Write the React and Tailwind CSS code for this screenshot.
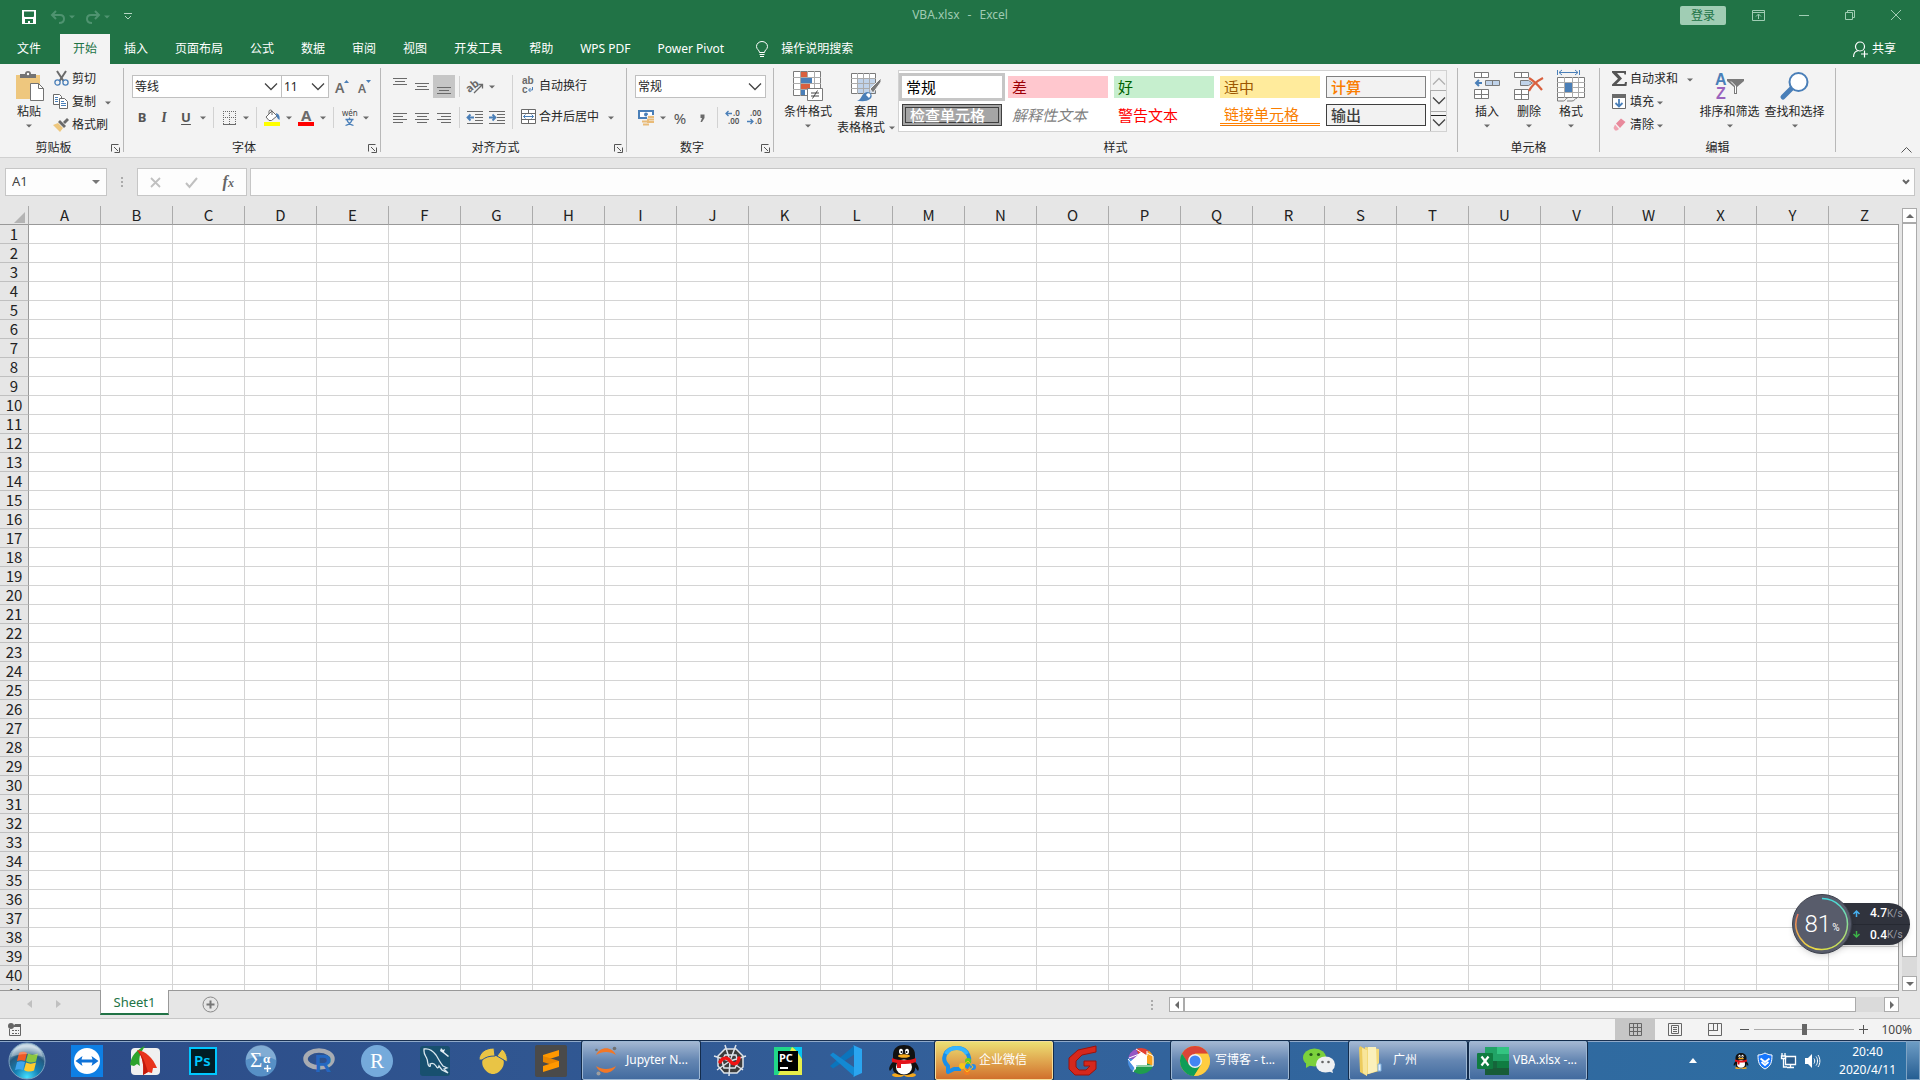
import React, { useState } from 'react';

const columns = 'ABCDEFGHIJKLMNOPQRSTUVWXYZ'.split('');
const rows = Array.from({ length: 42 }, (_, i) => i + 1);

const tabs = ['插入', '页面布局', '公式', '数据', '审阅', '视图', '开发工具', '帮助', 'WPS PDF', 'Power Pivot'];

const cellStyles = [
  { name: '常规', className: 'bg-white text-black ring-[3px] ring-[#c6c6c6]' },
  { name: '差', className: 'bg-[#ffc7ce] text-[#9c0006]' },
  { name: '好', className: 'bg-[#c6efce] text-[#006100]' },
  { name: '适中', className: 'bg-[#ffeb9c] text-[#9c5700]' },
  { name: '计算', className: 'bg-[#f2f2f2] text-[#fa7d00] font-medium border border-[#7f7f7f]' },
  { name: '检查单元格', className: 'bg-[#a5a5a5] text-white font-medium border-4 border-double border-[#3f3f3f]' },
  { name: '解释性文本', className: 'bg-white text-[#7f7f7f] italic' },
  { name: '警告文本', className: 'bg-white text-[#ff0000]' },
  { name: '链接单元格', className: 'bg-white text-[#fa7d00] border-b-3 border-double border-[#ff8001]' },
  { name: '输出', className: 'bg-[#f2f2f2] text-[#3f3f3f] font-medium border border-[#3f3f3f]' },
];

/* ---------- small shared pieces ---------- */

function Svg({ w, h, children, className = '', ...rest }) {
  return (
    <svg width={w} height={h} viewBox={`0 0 ${w} ${h}`} fill="none" className={`shrink-0 overflow-visible ${className}`} aria-hidden="true" {...rest}>
      {children}
    </svg>
  );
}

function Caret({ color = '#6a6a6a' }) {
  return (
    <Svg w={6} h={4}>
      <path d="M0 0.500h6L3 3.500z" fill={color} />
    </Svg>
  );
}

function Chevron({ color = '#444', up = false }) {
  return (
    <Svg w={14} h={8}>
      <path d={up ? 'M1 7.500L7 1.500L13 7.500' : 'M1 0.500L7 6.500L13 0.500'} stroke={color} strokeWidth="1.300" />
    </Svg>
  );
}

function CaretButton({ label }) {
  return (
    <button aria-label={label} className="flex h-[23px] w-3 items-center justify-center">
      <Caret />
    </button>
  );
}

function IconButton({ label, children }) {
  return (
    <button aria-label={label} className="flex h-[23px] w-[22px] items-center justify-center">
      {children}
    </button>
  );
}

function Divider() {
  return <span className="mx-1 h-[21px] w-px bg-[#d2d2d2]" />;
}

function Combo({ label, value, className }) {
  return (
    <label className={`flex h-[23px] items-center border border-[#c0c0c0] bg-white pr-[3px] pl-[2px] ${className}`}>
      <select aria-label={label} className="min-w-0 flex-1 appearance-none bg-transparent text-xs text-[#262626] outline-none">
        <option>{value}</option>
      </select>
      <Chevron />
    </label>
  );
}

function Group({ label, launcher = false, className, children }) {
  return (
    <section className={`flex shrink-0 flex-col ${className}`}>
      <div className="mt-1 mb-[5px] flex flex-1 flex-col border-r border-[#b8b8b8]">
        <div className="flex flex-1">{children}</div>
        <div className="-mb-1 flex h-4 items-center">
          <span className="flex-1 text-center leading-4">{label}</span>
          {launcher && (
            <button aria-label={`${label}设置`} className="flex w-4 justify-center">
              <Svg w={9} h={9}>
                <path d="M0.500 7.500V0.500H7.500M3 3l4 4M8.500 3.500v5h-5" stroke="#555" />
              </Svg>
            </button>
          )}
        </div>
      </div>
    </section>
  );
}

function BigButton({ icon, label, label2, className }) {
  return (
    <button className={`flex flex-col items-center self-start ${className}`}>
      <span className="flex h-9 items-center justify-center">{icon}</span>
      <span className="leading-4 whitespace-nowrap">{label}</span>
      {label2 ? (
        <span className="flex items-center gap-1 leading-4 whitespace-nowrap">
          {label2}
          <Caret />
        </span>
      ) : (
        <span className="flex h-3 items-center">
          <Caret />
        </span>
      )}
    </button>
  );
}

function SmallButton({ icon, label, children }) {
  return (
    <div className="flex h-[23px] items-center">
      <button className="flex h-[23px] items-center pb-[2px]">
        <span className="flex w-[22px] justify-center">{icon}</span>
        <span className="whitespace-nowrap">{label}</span>
      </button>
      {children}
    </div>
  );
}

function Lines({ widths, align = 'center' }) {
  const x = (w) => (align === 'left' ? 0 : align === 'right' ? 14 - w : (14 - w) / 2);
  return (
    <Svg w={14} h={3 * (widths.length - 1) + 1} shapeRendering="crispEdges">
      {widths.map((w, i) => (
        <rect key={i} x={x(w)} y={i * 3} width={w} height="1" fill="#6a6a6a" />
      ))}
    </Svg>
  );
}

/* ---------- ribbon icons ---------- */

const PasteIcon = () => (
  <Svg w={30} h={32}>
    <path d="M2 5h24v24H2z" fill="#eec77e" />
    <path d="M6 8V4h5a3 3 0 016 0h5v4z" fill="#737373" />
    <circle cx="14" cy="4" r="1.200" fill="#fff" />
    <path d="M16.500 13.500h8l5 5v12h-13z" fill="#fff" stroke="#737373" />
    <path d="M24.500 13.500v5h5" stroke="#737373" />
  </Svg>
);

const CutIcon = () => (
  <Svg w={15} h={15}>
    <path d="M3 0l6.500 10M12 0L5.500 10" stroke="#6a6a6a" strokeWidth="2" />
    <circle cx="3.500" cy="11.500" r="2.600" stroke="#4a7fb8" strokeWidth="1.300" />
    <circle cx="11.500" cy="11.500" r="2.600" stroke="#4a7fb8" strokeWidth="1.300" />
  </Svg>
);

const CopyIcon = () => (
  <Svg w={16} h={15}>
    <path d="M0.500 0.500h6l2 2v8h-8z" fill="#fff" stroke="#6a6a6a" />
    <path d="M6.500 4.500h5l3 3v7h-8z" fill="#fff" stroke="#6a6a6a" />
    <path d="M2 3.500h3M2 5.500h3M2 7.500h3M8 7.500h3M8 9.500h5M8 11.500h5" stroke="#4a7fb8" />
  </Svg>
);

const BrushIcon = () => (
  <Svg w={16} h={14}>
    <path d="M14 0l2 2-4 4-2-2z" fill="#6a6a6a" />
    <path d="M7 2l6 6-2 2-6-6z" fill="#6a6a6a" />
    <path d="M0 7l5-2 5 5-3 4z" fill="#eec77e" />
  </Svg>
);

const BucketIcon = () => (
  <Svg w={16} h={17}>
    <path d="M2 8l6-6 5 5-5.500 4.500H5z" fill="#fff" stroke="#6a6a6a" />
    <path d="M5 5V2.500a1.500 1.500 0 013 0V6" stroke="#6a6a6a" />
    <path d="M12 4c3 1 4 3 3.500 7-2-1-3-3-3.500-7z" fill="#4a7fb8" />
    <path d="M0 13h16v4H0z" fill="#ffff00" />
  </Svg>
);

const BorderIcon = () => (
  <Svg w={13} h={14} shapeRendering="crispEdges">
    <path d="M0 0.500h13M0 6.500h13M0.500 0v13M6.500 0v13M12.500 0v13" stroke="#6a6a6a" strokeDasharray="1 1" />
    <path d="M0 13h13" stroke="#6a6a6a" strokeWidth="1" />
  </Svg>
);

const IndentIcon = ({ increase = false }) => (
  <Svg w={16} h={13}>
    <path d="M0 0.500h16M8 3.500h8M8 6.500h8M8 9.500h8M0 12.500h16" stroke="#6a6a6a" />
    <path d={increase ? 'M0 6.500h6M3.500 3.500l3 3-3 3' : 'M7 6.500H1M3.500 3.500l-3 3 3 3'} stroke="#4a7fb8" strokeWidth="1.800" />
  </Svg>
);

const OrientIcon = () => (
  <Svg w={17} h={15}>
    <text x="-1" y="11" fontSize="11" fontWeight="bold" fill="#6a6a6a" fontFamily="Noto Sans" transform="rotate(-40 5 8)">ab</text>
    <path d="M7 14l8-8M11.500 5.500h4v4" stroke="#6a6a6a" strokeWidth="1.300" />
  </Svg>
);

const WrapIcon = () => (
  <Svg w={14} h={17}>
    <text x="1" y="7" fontSize="10" fontWeight="600" fill="#6a6a6a" fontFamily="Liberation Sans">ab</text>
    <text x="1" y="16" fontSize="10" fontWeight="600" fill="#6a6a6a" fontFamily="Liberation Sans">c</text>
    <path d="M11.500 10v3H8M9.500 11l-2 2 2 2" stroke="#4a7fb8" />
  </Svg>
);

const MergeIcon = () => (
  <Svg w={15} h={15}>
    <path d="M0.500 0.500h14v14H0.500zM0.500 4.500h14M0.500 10.500h14M7.500 0.500v4M7.500 10.500v4" fill="#fff" stroke="#6a6a6a" />
    <path d="M2.500 7.500h10M4.500 5.500l-2 2 2 2M10.500 5.500l2 2-2 2" stroke="#4a7fb8" />
  </Svg>
);

const MoneyIcon = () => (
  <Svg w={17} h={17}>
    <path d="M1 2h14v7H1z" fill="#fff" stroke="#4a7fb8" strokeWidth="2" />
    <circle cx="8" cy="5.500" r="2" fill="#4a7fb8" />
    <path d="M9 7.500h7M9 10h7M4 12.500h7M11.500 12.500h5M4 15.500h7" stroke="#f3f3f3" strokeWidth="3" />
    <path d="M10 8h6M9 10.500h7M4 12.500h7M9 13h7M5 15.500h6" stroke="#e9bb78" strokeWidth="1.800" />
  </Svg>
);

const DecimalIcon = ({ increase = false }) => (
  <Svg w={16} h={15}>
    <text x={increase ? 8 : 3} y="6" fontSize="8" fontWeight="600" fill="#555" fontFamily="Noto Sans">{increase ? '.0' : '.00'}</text>
    <text x={increase ? 3 : 8} y="14" fontSize="8" fontWeight="600" fill="#555" fontFamily="Noto Sans">{increase ? '.00' : '.0'}</text>
    <path d={increase ? 'M7 3.500H1M3.500 1l-2.500 2.500 2.500 2.500' : 'M0 11.500h6M3.500 9l2.500 2.500-2.500 2.500'} stroke="#4a7fb8" strokeWidth="1.300" />
  </Svg>
);

const ConditionalIcon = () => (
  <Svg w={30} h={32}>
    <path d="M0.500 1.500h27v24h-27z" fill="#fff" stroke="#7a7a7a" />
    <path d="M0 7.500h28M0 13.500h28M0 19.500h28M7.500 1v25M14.500 1v25M21.500 1v25" stroke="#ababab" />
    <path d="M8 2h6v5H8zM8 14h9v5H8z" fill="#d9603e" />
    <path d="M8 8h11v5H8zM8 20h4v5H8z" fill="#4a7fb8" />
    <path d="M14.500 18.500h15v12h-15z" fill="#fff" stroke="#7a7a7a" />
    <path d="M18 23h8M18 26h8M24.500 20.500l-5 8" stroke="#444" />
  </Svg>
);

const TableFormatIcon = () => (
  <Svg w={30} h={32}>
    <path d="M0.500 3.500h24v20h-24z" fill="#fff" />
    <path d="M7 9h18v15H7z" fill="#c0d3ea" />
    <path d="M0.500 3.500h24v20h-24z" stroke="#7a7a7a" />
    <path d="M0 8.500h25M0 13.500h25M0 18.500h25M6.500 3v21M12.500 3v21M18.500 3v21" stroke="#ababab" />
    <path d="M30 8L19 19l3 4 8-11z" fill="#7a7a7a" stroke="#f3f3f3" />
    <path d="M6 31c5-1 4-8 10-9 5 0 6 5 3 7-3 3-9 2-13 2z" fill="#4a7fb8" />
    <path d="M15 25c1-2 3-2 4-1s0 3-1 4z" fill="#fff" />
  </Svg>
);

const InsertIcon = () => (
  <Svg w={27} h={28}>
    <path d="M0.500 0.500h14v5h-14zM7.500 0v6M0.500 17.500h14v9h-14zM0 22.500h15M7.500 17v10" fill="#fff" stroke="#7a7a7a" />
    <path d="M11.500 8.500h14v5h-14zM18.500 8v6" fill="#c0d3ea" stroke="#7a7a7a" />
    <path d="M8 11H2M5 8l-3 3 3 3" stroke="#4a7fb8" strokeWidth="2" />
  </Svg>
);

const DeleteIcon = () => (
  <Svg w={30} h={28}>
    <path d="M0.500 0.500h14v5h-14zM7.500 0v6M0.500 17.500h14v10h-14zM0 22.500h15M7.500 17v10" fill="#fff" stroke="#7a7a7a" />
    <path d="M6.500 8.500h8l4 2.500-4 2.500h-8z" fill="#c0d3ea" stroke="#7a7a7a" />
    <path d="M15 6c5 3 9 7 13 12M29 6c-6 3-11 7-14 13" stroke="#d9603e" strokeWidth="2.200" />
  </Svg>
);

const FormatIcon = () => (
  <Svg w={28} h={32}>
    <path d="M0.500 0v5M22.500 0v5M2 2.500h19M5 0L2 2.500 5 5M18 0l3 2.500L18 5" stroke="#4a7fb8" />
    <path d="M0.500 7.500h27v20h-27z" fill="#fff" stroke="#7a7a7a" />
    <path d="M0 12.500h28M0 22.500h28M7.500 7v21M15.500 7v21M21.500 7v21M0 17.500h28" stroke="#ababab" />
    <path d="M8 13h7v9H8z" fill="#4a7fb8" />
    <path d="M0.500 28v3h6c2 0 2-3 4-3M10 31h5c3 0 3-3 5-3" stroke="#7a7a7a" />
  </Svg>
);

const SortIcon = () => (
  <Svg w={29} h={30}>
    <text x="0" y="14" fontSize="16" fontWeight="bold" fill="#4a7fb8" fontFamily="Liberation Sans">A</text>
    <text x="1" y="28" fontSize="16" fontWeight="bold" fill="#9a63bd" fontFamily="Liberation Sans">Z</text>
    <path d="M12 8h17v2l-7 6v7h-3v-7l-7-6z" fill="#7a7a7a" />
    <path d="M16 10.500l4.500 4.500v7" stroke="#fff" />
  </Svg>
);

const FindIcon = () => (
  <Svg w={28} h={30}>
    <path d="M11 17L2 26" stroke="#4a7fb8" strokeWidth="5" strokeLinecap="round" />
    <circle cx="17.500" cy="11" r="9" fill="#fff" stroke="#4a7fb8" strokeWidth="2" />
  </Svg>
);

const SumIcon = () => (
  <Svg w={15} h={15}>
    <path d="M0 0h14v3.500h-1.500L12 2H5l5 5.500L4.500 13H12.500l0.500-2H15l-0.500 4H0v-1.500L6 7.800 0 1.500z" fill="#555" />
  </Svg>
);

const FillIcon = () => (
  <Svg w={14} h={15}>
    <path d="M0.500 0.500h13v14h-13z" fill="#fff" stroke="#6a6a6a" />
    <path d="M0 0h14v4H0z" fill="#6a6a6a" />
    <path d="M7 5v7M3.500 9L7 12.500 10.500 9" stroke="#4a7fb8" strokeWidth="1.800" />
  </Svg>
);

const EraserIcon = () => (
  <Svg w={13} h={13}>
    <path d="M8 0.500l4.500 3.500L7 10 3 5.500z" fill="#e8899b" />
    <path d="M2 6.500L6 11l-2 1.500H2L0.500 10z" fill="#f0a3b1" />
  </Svg>
);

/* ---------- title bar and ribbon ---------- */

function TitleBar() {
  return (
    <header className="grid h-[34px] grid-cols-[1fr_auto_1fr] text-[#9fcbb2]">
      <div className="flex items-center pb-px pl-[22px]">
        <button aria-label="保存">
          <Svg w={14} h={14}>
            <path d="M0 0h14v14H0z" fill="#fff" />
            <path d="M2 1.500h10v5L11 7H3L2 6.500zM3 9h8v4H8v-2H6v2H3z" fill="#217346" />
          </Svg>
        </button>
        <button aria-label="撤消" className="ml-[15px]">
          <Svg w={14} h={14}>
            <path d="M5 1L1 5l4 4M1.500 5H9c3 0 4 2 4 4s-1.500 4-5 4" stroke="#4f9370" strokeWidth="2" />
          </Svg>
        </button>
        <span className="ml-1"><Caret color="#4f9370" /></span>
        <button aria-label="恢复" className="ml-[11px]">
          <Svg w={14} h={14}>
            <path d="M9 1l4 4-4 4M12.500 5H5C2 5 1 7 1 9s1.500 4 5 4" stroke="#4f9370" strokeWidth="2" />
          </Svg>
        </button>
        <span className="ml-1"><Caret color="#4f9370" /></span>
        <button aria-label="自定义快速访问工具栏" className="ml-[14px]">
          <Svg w={8} h={7}>
            <path d="M0 0.500h8M1 3l3 3 3-3" stroke="#b5d5c3" />
          </Svg>
        </button>
      </div>
      <h1 className="flex items-center gap-2 pb-1">
        <span>VBA.xlsx</span>
        <span>-</span>
        <span>Excel</span>
      </h1>
      <div className="flex items-center justify-end pr-px pb-1">
        <button className="mr-[9px] h-[19px] w-[46px] rounded-xs bg-[#a0cdb4] leading-[19px] text-[#217346]">登录</button>
        <button aria-label="功能区显示选项" className="flex w-[46px] justify-center">
          <Svg w={13} h={11}>
            <path d="M0.500 0.500h12v10H0.500zM0.500 2.500h12M6.500 9V4.500M4 6.500L6.500 4 9 6.500" stroke="#a0cdb4" />
          </Svg>
        </button>
        <button aria-label="最小化" className="flex w-[46px] justify-center">
          <Svg w={10} h={1}><path d="M0 0.500h10" stroke="#a0cdb4" /></Svg>
        </button>
        <button aria-label="还原" className="flex w-[46px] justify-center">
          <Svg w={10} h={10}>
            <path d="M0.500 2.500h7v7h-7zM2.500 2.500v-2h7v7h-2" stroke="#a0cdb4" />
          </Svg>
        </button>
        <button aria-label="关闭" className="flex w-[46px] justify-center">
          <Svg w={10} h={10}><path d="M0 0l10 10M10 0L0 10" stroke="#a0cdb4" /></Svg>
        </button>
      </div>
    </header>
  );
}

function TabBar() {
  return (
    <nav className="flex h-[30px] items-stretch gap-px pr-6 text-white">
      <button className="mr-px px-[17px] pb-px">文件</button>
      <button className="bg-[#f3f3f3] px-[13px] pb-px text-[#217346]">开始</button>
      {tabs.map((tab) => (
        <button key={tab} className="px-[13px] pb-px whitespace-nowrap">{tab}</button>
      ))}
      <button className="ml-[18px] flex items-center gap-[13px]">
        <Svg w={12} h={17}>
          <path d="M3.500 11.500C3.500 9 0.500 8.500 0.500 5.500a5.500 5 0 0111 0c0 3-3 3.500-3 6zM3.500 13.500h5M4 15.500h4" stroke="#fff" />
        </Svg>
        操作说明搜索
      </button>
      <button className="ml-auto flex items-center gap-1">
        <Svg w={15} h={17}>
          <circle cx="7" cy="5.500" r="4.500" stroke="#fff" strokeWidth="1.200" />
          <path d="M0.500 16c0-4 2-6 5-6.500M11.500 9.500v7M8 13h7" stroke="#fff" strokeWidth="1.200" />
        </Svg>
        共享
      </button>
    </nav>
  );
}

function Ribbon() {
  return (
    <div className="flex h-[94px] border-b border-[#d0d0d0] bg-[#f3f3f3] text-[#262626]">
      <Group label="剪贴板" launcher className="w-[124px]">
        <BigButton icon={<PasteIcon />} label="粘贴" className="ml-2 w-[42px]" />
        <div>
          <SmallButton icon={<CutIcon />} label="剪切" />
          <SmallButton icon={<CopyIcon />} label="复制">
            <span className="ml-[6px]"><CaretButton label="复制选项" /></span>
          </SmallButton>
          <SmallButton icon={<BrushIcon />} label="格式刷" />
        </div>
      </Group>

      <Group label="字体" launcher className="w-[257px]">
        <div className="flex flex-col gap-2 pt-[7px] pl-2">
          <div className="flex items-center">
            <Combo label="字体" value="等线" className="w-[150px]" />
            <Combo label="字号" value="11" className="-ml-px w-12" />
            <span className="w-[2px]" />
            <IconButton label="增大字号">
              <Svg w={14} h={16}>
                <text x="0" y="14" fontSize="14" fontWeight="600" fill="#6a6a6a" fontFamily="Noto Sans">A</text>
                <path d="M9 4l2.500-3L14 4z" fill="#4a7fb8" />
              </Svg>
            </IconButton>
            <IconButton label="减小字号">
              <Svg w={13} h={16}>
                <text x="0" y="14" fontSize="12" fontWeight="600" fill="#6a6a6a" fontFamily="Noto Sans">A</text>
                <path d="M8 1l2.500 3L13 1z" fill="#4a7fb8" />
              </Svg>
            </IconButton>
          </div>
          <div className="-ml-px flex items-center text-[13px] text-[#555]">
            <IconButton label="加粗"><b>B</b></IconButton>
            <IconButton label="倾斜"><i className="font-serif text-sm font-bold">I</i></IconButton>
            <IconButton label="下划线"><span className="font-bold underline underline-offset-2">U</span></IconButton>
            <CaretButton label="下划线选项" />
            <Divider />
            <IconButton label="边框"><BorderIcon /></IconButton>
            <CaretButton label="边框选项" />
            <Divider />
            <IconButton label="填充颜色"><BucketIcon /></IconButton>
            <CaretButton label="填充颜色选项" />
            <IconButton label="字体颜色">
              <Svg w={16} h={17}>
                <text x="3" y="12" fontSize="15" fontWeight="bold" fill="#6a6a6a" fontFamily="Noto Sans">A</text>
                <path d="M0 13h16v4H0z" fill="#ff0000" />
              </Svg>
            </IconButton>
            <CaretButton label="字体颜色选项" />
            <Divider />
            <IconButton label="拼音">
              <Svg w={17} h={18}>
                <text x="1" y="7" fontSize="8" fill="#444" fontFamily="Noto Sans">wén</text>
                <path d="M8.500 8.500v2M4.500 10.500h8M6 11c1 3 3 4.500 6.500 5.500M11 11c-1 3-3 4.500-6.500 5.500" stroke="#4a7fb8" strokeWidth="1.300" />
              </Svg>
            </IconButton>
            <CaretButton label="拼音选项" />
          </div>
        </div>
      </Group>

      <Group label="对齐方式" launcher className="w-[246px]">
        <div className="flex items-start pt-[7px] pl-2">
          <div className="flex w-[124px] flex-col gap-2 border-r border-[#d2d2d2]">
            <div className="flex items-center">
              <button aria-label="顶端对齐" className="flex h-[23px] w-[22px] items-start justify-center pt-[3px]"><Lines widths={[14, 10, 14]} /></button>
              <IconButton label="垂直居中"><Lines widths={[14, 10, 14]} /></IconButton>
              <button aria-label="底端对齐" className="flex h-[23px] w-[22px] items-end justify-center bg-[#c6c6c6] pb-1"><Lines widths={[14, 10, 14]} /></button>
              <Divider />
              <IconButton label="方向"><OrientIcon /></IconButton>
              <CaretButton label="方向选项" />
            </div>
            <div className="flex items-center">
              <IconButton label="左对齐"><Lines widths={[14, 10, 14, 10]} align="left" /></IconButton>
              <IconButton label="居中"><Lines widths={[14, 10, 14, 10]} /></IconButton>
              <IconButton label="右对齐"><Lines widths={[14, 10, 14, 10]} align="right" /></IconButton>
              <Divider />
              <IconButton label="减少缩进量"><IndentIcon /></IconButton>
              <IconButton label="增加缩进量"><IndentIcon increase /></IconButton>
            </div>
          </div>
          <div className="flex flex-col gap-2 pl-1">
            <SmallButton icon={<WrapIcon />} label="自动换行" />
            <SmallButton icon={<MergeIcon />} label="合并后居中">
              <span className="ml-[6px]"><CaretButton label="合并选项" /></span>
            </SmallButton>
          </div>
        </div>
      </Group>

      <Group label="数字" launcher className="w-[147px]">
        <div className="flex flex-col gap-2 pt-[7px] pl-2">
          <Combo label="数字格式" value="常规" className="w-[131px]" />
          <div className="flex items-center text-[15px] text-[#555]">
            <IconButton label="会计数字格式"><MoneyIcon /></IconButton>
            <CaretButton label="会计数字格式选项" />
            <IconButton label="百分比样式">%</IconButton>
            <IconButton label="千位分隔样式">
              <Svg w={5} h={8}><path d="M0.500 0.500h4V4L2 8H0.500L2 4H0.500z" fill="#6a6a6a" /></Svg>
            </IconButton>
            <Divider />
            <IconButton label="增加小数位数"><DecimalIcon increase /></IconButton>
            <IconButton label="减少小数位数"><DecimalIcon /></IconButton>
          </div>
        </div>
      </Group>

      <Group label="样式" className="w-[684px]">
        <BigButton icon={<ConditionalIcon />} label="条件格式" className="ml-[7px] w-[54px]" />
        <BigButton icon={<TableFormatIcon />} label="套用" label2="表格格式" className="w-[62px]" />
        <div className="mt-[2px] ml-px flex self-start border border-[#d2d2d2] bg-white">
          <div className="grid grid-cols-5 gap-[6px] py-[5px] pr-1 pl-[3px] font-['Noto_Sans_CJK_SC',sans-serif] text-[15px] leading-[18px]">
            {cellStyles.map((s) => (
              <button key={s.name} className={`flex h-[22px] w-[100px] items-center pl-1 text-left whitespace-nowrap ${s.className}`}>
                {s.name}
              </button>
            ))}
          </div>
          <div className="flex w-4 flex-col bg-[#f3f3f3]">
            <button aria-label="上一行" className="flex flex-1 items-center justify-center border-l border-[#d2d2d2]"><Chevron up color="#b0b0b0" /></button>
            <button aria-label="下一行" className="flex flex-1 items-center justify-center border border-r-0 border-[#ababab]"><Chevron /></button>
            <button aria-label="其他" className="flex flex-1 flex-col items-center justify-center gap-[3px] border-l border-[#ababab]">
              <span className="h-px w-full bg-[#222]" />
              <Chevron />
            </button>
          </div>
        </div>
      </Group>

      <Group label="单元格" className="w-[142px]">
        <BigButton icon={<InsertIcon />} label="插入" className="ml-2 w-[42px]" />
        <BigButton icon={<DeleteIcon />} label="删除" className="w-[42px]" />
        <BigButton icon={<FormatIcon />} label="格式" className="w-[42px]" />
      </Group>

      <Group label="编辑" className="w-[236px]">
        <div className="w-[97px] pl-2">
          <SmallButton icon={<SumIcon />} label="自动求和">
            <span className="ml-[6px]"><CaretButton label="自动求和选项" /></span>
          </SmallButton>
          <SmallButton icon={<FillIcon />} label="填充"><CaretButton label="填充选项" /></SmallButton>
          <SmallButton icon={<EraserIcon />} label="清除"><CaretButton label="清除选项" /></SmallButton>
        </div>
        <BigButton icon={<SortIcon />} label="排序和筛选" className="w-[65px]" />
        <BigButton icon={<FindIcon />} label="查找和选择" className="w-[65px]" />
      </Group>

      <button aria-label="折叠功能区" className="mr-2 mb-1 ml-auto self-end">
        <Svg w={11} h={6}><path d="M0.500 5.500l5-5 5 5" stroke="#555" /></Svg>
      </button>
    </div>
  );
}

function Dots() {
  return (
    <Svg w={2} h={10}>
      <path d="M0 0h2v2H0zM0 4h2v2H0zM0 8h2v2H0z" fill="#ababab" />
    </Svg>
  );
}

function FormulaBar() {
  const [formula, setFormula] = useState('');
  return (
    <div className="flex items-center px-[5px] py-[10px]">
      <div className="flex h-7 w-[102px] items-center border border-[#c6c6c6] bg-[#fdfdfd] pr-[6px]">
        <input aria-label="名称框" defaultValue="A1" className="min-w-0 flex-1 bg-transparent pl-[6px] text-[13px] text-[#444] outline-none" />
        <Svg w={8} h={4}><path d="M0 0h8L4 4z" fill="#777" /></Svg>
      </div>
      <span className="flex w-[30px] justify-center"><Dots /></span>
      <div className="flex h-7 w-[110px] items-center justify-around border border-[#c6c6c6] bg-[#fdfdfd]">
        <button aria-label="取消">
          <Svg w={11} h={11}><path d="M1 1l9 9M10 1l-9 9" stroke="#c0c0c0" strokeWidth="1.800" /></Svg>
        </button>
        <button aria-label="输入">
          <Svg w={13} h={11}><path d="M1 6l3.500 4L12 1" stroke="#c0c0c0" strokeWidth="2" /></Svg>
        </button>
        <button aria-label="插入函数" className="font-['Liberation_Serif',serif] text-base leading-5 font-bold text-[#666] italic">
          f<span className="text-xs">x</span>
        </button>
      </div>
      <div className="ml-[3px] flex h-7 flex-1 items-center border border-[#c6c6c6] bg-[#fdfdfd] pr-1">
        <input aria-label="编辑栏" value={formula} onChange={(e) => setFormula(e.target.value)} className="min-w-0 flex-1 bg-transparent px-2 text-[13px] outline-none" />
        <Svg w={8} h={6}><path d="M1 1l3 3 3-3" stroke="#666" strokeWidth="2" /></Svg>
      </div>
    </div>
  );
}

/* ---------- worksheet ---------- */

function ScrollButton({ label, d }) {
  return (
    <button aria-label={label} className="flex size-[15px] shrink-0 items-center justify-center border border-[#ababab] bg-white">
      <Svg w={8} h={8}><path d={d} fill="#6a6a6a" /></Svg>
    </button>
  );
}

function Worksheet() {
  return (
    <div className="flex min-h-0 flex-1">
      <div className="min-w-0 flex-1 overflow-hidden border-b border-[#999]">
        <table className="w-[1901px] table-fixed border-separate border-spacing-0 font-['Noto_Sans_CJK_SC',sans-serif] text-[15px] leading-[18px] text-[#222]">
          <thead>
            <tr>
              <th className="h-[19px] w-[29px] border-r border-b border-r-[#ababab] border-b-[#999] p-0">
                <Svg w={11} h={11} className="mt-1 mr-[3px] ml-auto"><path d="M11 0v11H0z" fill="#b4b4b4" /></Svg>
              </th>
              {columns.map((c) => (
                <th key={c} className="h-[19px] w-[72px] border-r border-b border-r-[#ababab] border-b-[#999] p-0 text-center font-normal">{c}</th>
              ))}
            </tr>
          </thead>
          <tbody>
            {rows.map((r) => (
              <tr key={r}>
                <th className="h-[19px] border-r border-b border-r-[#999] border-b-[#c0c0c0] p-0 text-center font-normal">{r}</th>
                {columns.map((c) => (
                  <td key={c} className="h-[19px] border-r border-b border-[#d4d4d4] bg-white p-0" />
                ))}
              </tr>
            ))}
          </tbody>
        </table>
      </div>
      <span className="mt-[18px] w-px bg-[#999]" />
      <div className="mx-[3px] mt-[2px] flex w-[15px] flex-col bg-[#dadada]">
        <ScrollButton label="向上滚动" d="M0 6l4-4 4 4z" />
        <div className="flex-1 border border-[#ababab] bg-white" />
        <div className="h-[19px]" />
        <ScrollButton label="向下滚动" d="M0 2h8L4 6z" />
      </div>
    </div>
  );
}

function SheetBar() {
  return (
    <div className="flex h-[27px] items-start">
      <div className="flex h-[26px] w-[100px] items-center gap-6 pl-[27px]">
        <button aria-label="上一张工作表"><Svg w={5} h={8}><path d="M5 0v8L0 4z" fill="#c0c0c0" /></Svg></button>
        <button aria-label="下一张工作表"><Svg w={5} h={8}><path d="M0 0v8l5-4z" fill="#c0c0c0" /></Svg></button>
      </div>
      <button className="-mt-px h-[25px] w-[69px] border-x border-b-2 border-x-[#999] border-b-[#217346] bg-white text-[13px] leading-[22px] text-[#217346]">Sheet1</button>
      <button aria-label="新工作表" className="ml-[33px] flex h-[26px] items-center">
        <Svg w={17} h={17}>
          <circle cx="8.500" cy="8.500" r="7.500" stroke="#8a8a8a" />
          <path d="M8.500 4.500v8M4.500 8.500h8" stroke="#777" strokeWidth="2" />
        </Svg>
      </button>
      <div className="ml-auto flex h-[27px] items-center pr-[21px]">
        <Dots />
        <div className="ml-4 flex w-[730px] bg-[#dadada]">
          <ScrollButton label="向左滚动" d="M6 0v8L2 4z" />
          <div className="flex-1 border border-[#ababab] bg-white" />
          <div className="w-7" />
          <ScrollButton label="向右滚动" d="M2 0v8l4-4z" />
        </div>
      </div>
    </div>
  );
}

function StatusBar() {
  const [zoom, setZoom] = useState(100);
  return (
    <footer className="flex h-[22px] items-center border-t border-[#c6c6c6] bg-[#f3f3f3] px-2 text-[#444]">
      <button aria-label="录制宏">
        <Svg w={13} h={13}>
          <path d="M7 1h6v3H5z" fill="#666" />
          <path d="M1.500 6v6.500h11V4M4 7.500h2M7 7.500h2M10 7.500h1M4 10.500h2M7 10.500h2M10 10.500h1" stroke="#666" />
          <circle cx="3" cy="3" r="3" fill="#666" />
        </Svg>
      </button>
      <div className="ml-auto flex h-full">
        <button aria-label="普通" className="flex w-10 items-center justify-center bg-[#c6c6c6]">
          <Svg w={13} h={13}><path d="M0.500 0.500h12v12H0.500zM4.500 0v13M8.500 0v13M0 4.500h13M0 8.500h13" stroke="#666" /></Svg>
        </button>
        <button aria-label="页面布局" className="flex w-10 items-center justify-center">
          <Svg w={14} h={13}><path d="M0.500 0.500h13v12H0.500zM3.500 2.500h7v8h-7zM5 4.500h4M5 6.500h4M5 8.500h4" stroke="#666" /></Svg>
        </button>
        <button aria-label="分页预览" className="flex w-10 items-center justify-center">
          <Svg w={14} h={13}><path d="M0.500 0.500h13v12H0.500zM5.500 0v7.500M9.500 0v7.500M0 7.500h10" stroke="#666" /></Svg>
        </button>
      </div>
      <button aria-label="缩小" className="ml-[5px]"><Svg w={9} h={9}><path d="M0 4.500h9" stroke="#555" /></Svg></button>
      <input
        type="range"
        aria-label="缩放"
        min="0"
        max="200"
        value={zoom}
        onChange={(e) => setZoom(Number(e.target.value))}
        className="mx-[5px] h-3 w-[100px] appearance-none bg-[linear-gradient(#ababab,#ababab)] bg-[length:100%_1px] bg-center bg-no-repeat [&::-webkit-slider-thumb]:h-[11px] [&::-webkit-slider-thumb]:w-[5px] [&::-webkit-slider-thumb]:appearance-none [&::-webkit-slider-thumb]:bg-[#666]"
      />
      <button aria-label="放大"><Svg w={9} h={9}><path d="M0 4.500h9M4.500 0v9" stroke="#555" /></Svg></button>
      <span className="ml-3 w-8 text-right whitespace-nowrap">{zoom}%</span>
    </footer>
  );
}

/* ---------- taskbar ---------- */

const StartLogo = () => (
  <Svg w={38} h={38}>
    <defs>
      <radialGradient id="orb" cx="50%" cy="95%" r="85%">
        <stop offset="0" stopColor="#45e0ff" />
        <stop offset="0.400" stopColor="#1580b4" />
        <stop offset="0.750" stopColor="#245a80" />
        <stop offset="1" stopColor="#b8cfdd" />
      </radialGradient>
    </defs>
    <circle cx="19" cy="19" r="18" fill="url(#orb)" stroke="#7ea3c0" />
    <path d="M11 11c3-2 6-1 8 0l-2 8c-3-1-5-1-8 0z" fill="#ee5a24" />
    <path d="M20 11.500c3 1.500 6 1.500 10 0l-2 8c-3 1.500-7 1.500-10-0.500z" fill="#8cc63f" />
    <path d="M9 20c3-1 5-1 8 0l-2 8c-3-1-5-1-8 0z" fill="#3fa5ee" />
    <path d="M18 20.500c3 1.500 6 1.500 10 0l-2 8c-3 1.500-7 1.500-10-0.500z" fill="#ffcb2e" />
    <path d="M3 15a16.500 16.500 0 0132 0C24 11 13 11 3 15z" fill="#fff" opacity="0.300" />
  </Svg>
);

const TeamViewerLogo = () => (
  <Svg w={32} h={32}>
    <path d="M0 0h32v32H0z" fill="#0e7fe4" />
    <circle cx="16" cy="16" r="13" fill="#fff" />
    <path d="M4.500 16l7-5-1 3.500h11l-1-3.500 7 5-7 5 1-3.500h-11l1 3.500z" fill="#0e72d8" />
  </Svg>
);

const FastStoneLogo = () => (
  <Svg w={32} h={32}>
    <rect x="2" y="3" width="29" height="27" rx="4" fill="#f0f0f0" />
    <path d="M1 20C2 11 7 5 16 1l-3 5c-3 4-3 10-2 15l-3-2-3 2z" fill="#2ca32c" />
    <path d="M8 5c9 1 16 8 20 18l-4 0-1 5-4-1-5 3c1-9 0-18-6-25z" fill="#e8341c" />
    <path d="M8 5c5 4 8 12 11 22l-5 3c1-9 0-18-6-25z" fill="#c31a0c" />
  </Svg>
);

const PhotoshopLogo = () => (
  <Svg w={28} h={28}>
    <path d="M1 1h26v26H1z" fill="#001d26" stroke="#00c8ff" strokeWidth="2" />
    <text x="5" y="19" fontSize="15" fontWeight="600" fill="#00c8ff" fontFamily="Noto Sans">Ps</text>
  </Svg>
);

const SpssLogo = () => (
  <Svg w={32} h={32}>
    <circle cx="16" cy="16" r="15.500" fill="#5790c6" />
    <path d="M1 15a15 15 0 0130 0C20 10 10 11 1 15z" fill="#fff" opacity="0.250" />
    <text x="5" y="22" fontSize="21" fill="#fff" fontFamily="Liberation Serif">Σ</text>
    <text x="18" y="18" fontSize="13" fontWeight="bold" fill="#fff" fontFamily="Liberation Serif">α</text>
    <path d="M22.500 20v7M19 23.500h7" stroke="#fff" strokeWidth="1.500" />
  </Svg>
);

const RLogo = () => (
  <Svg w={32} h={32}>
    <ellipse cx="16" cy="14" rx="13.500" ry="8.500" stroke="#a9acb2" strokeWidth="4.500" />
    <text x="12" y="27" fontSize="23" fontWeight="bold" fill="#2467c0" fontFamily="Liberation Sans">R</text>
  </Svg>
);

const RStudioLogo = () => (
  <Svg w={32} h={32}>
    <circle cx="16" cy="16" r="16" fill="#75aadb" />
    <text x="9" y="23" fontSize="21" fill="#fff" fontFamily="Liberation Serif">R</text>
  </Svg>
);

const MySqlLogo = () => (
  <Svg w={32} h={32}>
    <rect x="1" y="1" width="30" height="30" rx="3" fill="#18506f" />
    <path d="M5 4c5-1 9 2 12 6 3 5 5 9 7 11l4 2-3 1 4 4-6-3-3-4c-1 3-2 2-3 0-2-3-4-3-6-2 1 2 0 3-1 2-2-2-1-5-2-7-1-3-3-4-3-8z" stroke="#dbe9f0" strokeWidth="1.300" />
    <path d="M22 3l2 2 2-1-1 3 5 4-1 1-5-4-3-2z" fill="#e6f0f5" />
  </Svg>
);

const NavicatLogo = () => (
  <Svg w={30} h={28}>
    <path d="M5 12c3-4 18-4 20 0 3 6-3 15-10 15S2 18 5 12z" fill="#e9c445" />
    <path d="M1 13C1 6 7 1 16 1l1 8c-6 0-9 1-13 4z" fill="#e9c445" stroke="#2f5793" />
    <path d="M19 9l5-7c4 3 6 8 5 13z" fill="#e9c445" stroke="#2f5793" />
  </Svg>
);

const SublimeLogo = () => (
  <Svg w={32} h={32}>
    <rect width="32" height="32" rx="2" fill="#4a4a4a" />
    <path d="M8 10l16-5v6l-16 5z" fill="#ff9800" />
    <path d="M8 11l16 5v6L8 17z" fill="#e88500" />
    <path d="M8 21l16-5v6L8 27z" fill="#ff9800" />
  </Svg>
);

const JupyterLogo = () => (
  <Svg w={28} h={32}>
    <path d="M4 10c4-9 16-9 20 0-6-4-14-4-20 0zM4 21c4 9 16 9 20 0-6 4-14 4-20 0z" fill="#f37726" />
    <circle cx="22.500" cy="3.500" r="1.800" fill="#6f7070" />
    <circle cx="4.500" cy="5" r="1.300" fill="#6f7070" />
    <circle cx="6.500" cy="28.500" r="2" fill="#9e9e9e" />
  </Svg>
);

const SpyderLogo = () => (
  <Svg w={32} h={32}>
    <path d="M11 4h11l7 7v11l-6 6H10l-6-7V11z" fill="#3c3c3c" stroke="#dde3ea" strokeWidth="1.500" />
    <path d="M11 0l5 16M22 0l-6 16M0 11l16 5M32 11l-16 5M3 25l13-9M29 25l-13-9M15 31l1-15M11 10h11l2 7-3 6H10l-2-7z" stroke="#dde3ea" strokeWidth="1.500" />
    <path d="M6 17c3-5 7-5 10-1s8 4 9-3" stroke="#f01414" strokeWidth="3.500" strokeLinecap="round" />
  </Svg>
);

const PyCharmLogo = () => (
  <Svg w={28} h={28}>
    <path d="M0 0h28v28H0z" fill="#21d789" />
    <path d="M28 8v20H4L18 0z" fill="#e6ee4a" />
    <path d="M20 0h8v12z" fill="#07c3f2" />
    <path d="M4 4h20v20H4z" fill="#000" />
    <text x="5" y="15" fontSize="11" fontWeight="bold" fill="#fff" fontFamily="Noto Sans">PC</text>
    <path d="M6 20h8v2H6z" fill="#fff" />
  </Svg>
);

const VsCodeLogo = () => (
  <Svg w={32} h={32}>
    <path d="M0 21l3 2.500L25 9V0z" fill="#0b75bd" />
    <path d="M0 10l3-2.500L25 23v9z" fill="#1389d3" />
    <path d="M23 0l9 4v24l-9 4c1-1 1-2 1-3V3c0-1 0-2-1-3z" fill="#2aa5f0" />
  </Svg>
);

const QQLogo = ({ size = 32 }) => (
  <svg width={size} height={size} viewBox="0 0 32 32" aria-hidden="true">
    <path d="M6 16c-4 3-6 8-4 10l4-5zM26 16c4 3 6 8 4 10l-4-5z" fill="#111" />
    <ellipse cx="10" cy="30" rx="6" ry="2" fill="#f5a91c" />
    <ellipse cx="22" cy="30" rx="6" ry="2" fill="#f5a91c" />
    <path d="M5 10C5 3 10 0 16 0s11 3 11 10v14c0 4-5 6-11 6S5 28 5 24z" fill="#111" />
    <ellipse cx="16" cy="22" rx="8" ry="7.500" fill="#fff" />
    <ellipse cx="13" cy="6.500" rx="2" ry="2.800" fill="#fff" />
    <ellipse cx="19" cy="6.500" rx="2" ry="2.800" fill="#fff" />
    <circle cx="13.500" cy="7" r="1" fill="#111" />
    <circle cx="18.500" cy="7" r="1" fill="#111" />
    <ellipse cx="16" cy="11" rx="6" ry="1.700" fill="#f5a91c" />
    <path d="M4 13c7 3 17 3 24 0l0 4c-5 2-10 2-15 2v4H9v-5l-5-1z" fill="#e3131b" />
  </svg>
);

const WeComLogo = () => (
  <Svg w={34} h={32}>
    <path d="M24 23c7-8 2-20-9-20C2 3-1 15 6 21v6l6-3h7" stroke="#1a8fe8" strokeWidth="4" strokeLinejoin="round" />
    <path d="M4 9c4-8 17-8 21 0" stroke="#35b5ff" strokeWidth="4" />
    <circle cx="26" cy="16" r="3" fill="#6ad018" />
    <circle cx="31" cy="22" r="3" fill="#2b8be6" />
    <circle cx="25" cy="27" r="3" fill="#f47b20" />
    <circle cx="20" cy="21" r="3" fill="#f9c51a" />
    <path d="M26 16l5 6-6 5-5-6z" stroke="#f9c51a" />
  </Svg>
);

const GLogo = () => (
  <Svg w={28} h={30}>
    <path d="M27 0v6l-14 3-6 6v6l3 3h7l4-4h-6v-5h12v8l-7 6H6l-6-6V12l9-8z" fill="#d6281c" stroke="#9c130c" />
  </Svg>
);

const PicasaLogo = () => (
  <Svg w={26} h={26}>
    <path d="M13 13L8 1A13 13 0 0121 2.800z" fill="#e34133" />
    <path d="M13 13l8-10.200A13 13 0 0125 18z" fill="#f9a11b" />
    <path d="M13 13l12 5A13 13 0 015 23.300z" fill="#1f9d4d" />
    <path d="M13 13L5 23.300A13 13 0 010.300 10z" fill="#4a8fe0" />
    <path d="M13 13L0.300 10A13 13 0 018 1z" fill="#9556c4" />
    <path d="M8 1l11 7V3M25 18V8l-6-3M5 24l3-6h17M0 11l8 9M14 5L1 10" stroke="#fff" />
    <path d="M2 14L13 4l6 4v9H8v5z" fill="#fff" />
  </Svg>
);

const ChromeLogo = () => (
  <Svg w={30} h={30}>
    <circle cx="15" cy="15" r="15" fill="#fbc02d" />
    <path d="M2 7.500A15 15 0 0128 7.500H15L8.500 19z" fill="#db4437" />
    <path d="M2 7.500A15 15 0 0014 30l7-11.500H9z" fill="#0f9d58" />
    <path d="M15 8h13a15 15 0 01-14 22l8-12z" fill="#ffcd40" />
    <circle cx="15" cy="15" r="7" fill="#f1f1f1" />
    <circle cx="15" cy="15" r="5.500" fill="#4285f4" />
  </Svg>
);

const WeChatLogo = () => (
  <Svg w={32} h={26}>
    <ellipse cx="11.500" cy="9.500" rx="11.500" ry="9" fill="#7bd13c" />
    <path d="M3 15l0 5 5-3z" fill="#7bd13c" />
    <circle cx="8" cy="6.500" r="1.600" fill="#27591a" />
    <circle cx="15.500" cy="6.500" r="1.600" fill="#27591a" />
    <ellipse cx="22.500" cy="16.500" rx="9.500" ry="8" fill="#eef0f2" />
    <path d="M29 21l1 4-5-2z" fill="#eef0f2" />
    <circle cx="19.500" cy="14" r="1.300" fill="#666" />
    <circle cx="25.500" cy="14" r="1.300" fill="#666" />
  </Svg>
);

const FolderLogo = () => (
  <Svg w={28} h={32}>
    <path d="M6 2l14 2v22L6 30z" fill="#f3d978" />
    <path d="M9 2l8 0 1 24-9 3z" fill="#fbf0bb" />
    <path d="M0 3l1-2 7 4v26L1 27z" fill="#eccb5d" />
    <path d="M3 3l5 2v26l-4-3z" fill="#f8e59a" />
    <path d="M19 19h3v7h-3z" fill="#e8f2fb" stroke="#7db0e0" />
  </Svg>
);

const ExcelLogo = () => (
  <Svg w={32} h={28}>
    <path d="M8 0h12v14H8z" fill="#21a366" />
    <path d="M20 0h12v7H20z" fill="#33c481" />
    <path d="M20 7h12v7H20z" fill="#21a366" />
    <path d="M8 14h24v14H8z" fill="#185c37" />
    <path d="M20 14h12v7H20z" fill="#107c41" />
    <path d="M8 14h12v7H8z" fill="#15663b" />
    <rect y="6" width="16" height="16" rx="1" fill="#107c41" />
    <path d="M4.500 9.500l7 9M11.500 9.500l-7 9" stroke="#fff" strokeWidth="2.200" />
  </Svg>
);

function TaskIcon({ label, children }) {
  return (
    <button aria-label={label} className="flex w-[58px] shrink-0 items-center justify-center">{children}</button>
  );
}

function TaskWindow({ label, icon, alert = false }) {
  return (
    <button
      className={`mx-px flex w-[118px] shrink-0 items-center gap-1 rounded-xs border px-[7px] text-left whitespace-nowrap ring-1 ring-[#132c4c] ${
        alert
          ? 'border-[#f5dd9a] bg-linear-to-b from-[#eadf73] to-[#d06f2c]'
          : 'border-[#9db7d3] bg-linear-to-b from-[#a3b7d2] via-[#6486b2] to-[#426b9f]'
      }`}
    >
      <span className="flex w-8 shrink-0 justify-center">{icon}</span>
      <span className="pb-[2px]">{label}</span>
    </button>
  );
}

function Taskbar() {
  return (
    <div className="flex h-10 items-stretch border-t border-[#1b3252] bg-linear-to-r from-[#2c4a86] via-[#33609a] to-[#2d6fa3] text-white shadow-[inset_0_1px_0_#8fa9c9]">
      <button aria-label="开始" className="flex w-[58px] shrink-0 items-center justify-center pr-1"><StartLogo /></button>
      <TaskIcon label="TeamViewer"><TeamViewerLogo /></TaskIcon>
      <TaskIcon label="FastStone"><FastStoneLogo /></TaskIcon>
      <TaskIcon label="Photoshop"><PhotoshopLogo /></TaskIcon>
      <TaskIcon label="SPSS"><SpssLogo /></TaskIcon>
      <TaskIcon label="R"><RLogo /></TaskIcon>
      <TaskIcon label="RStudio"><RStudioLogo /></TaskIcon>
      <TaskIcon label="MySQL Workbench"><MySqlLogo /></TaskIcon>
      <TaskIcon label="数据库"><NavicatLogo /></TaskIcon>
      <TaskIcon label="Sublime Text"><SublimeLogo /></TaskIcon>
      <span className="w-px" />
      <TaskWindow label="Jupyter N..." icon={<JupyterLogo />} />
      <TaskIcon label="Spyder"><SpyderLogo /></TaskIcon>
      <TaskIcon label="PyCharm"><PyCharmLogo /></TaskIcon>
      <TaskIcon label="VS Code"><VsCodeLogo /></TaskIcon>
      <TaskIcon label="QQ"><QQLogo /></TaskIcon>
      <span className="w-px" />
      <TaskWindow label="企业微信" icon={<WeComLogo />} alert />
      <TaskIcon label="G"><GLogo /></TaskIcon>
      <TaskIcon label="Picasa"><PicasaLogo /></TaskIcon>
      <TaskWindow label="写博客 - t..." icon={<ChromeLogo />} />
      <TaskIcon label="微信"><WeChatLogo /></TaskIcon>
      <TaskWindow label="广州" icon={<FolderLogo />} />
      <TaskWindow label="VBA.xlsx -..." icon={<ExcelLogo />} />

      <div className="ml-auto flex items-center">
        <button aria-label="显示隐藏的图标" className="mr-9">
          <Svg w={8} h={5}><path d="M0 5l4-5 4 5z" fill="#fff" /></Svg>
        </button>
        <div className="flex items-center gap-2">
          <QQLogo size={16} />
          <Svg w={16} h={16}>
            <path d="M1 2c3 0 5-1 7-2 2 1 4 2 7 2 0 7-1 11-7 14C2 13 1 9 1 2z" fill="#1677ff" stroke="#fff" />
            <path d="M3.500 5.500L8 9l4.500-3.500M4.500 9L8 12l3.500-3" stroke="#fff" strokeWidth="1.800" />
          </Svg>
          <Svg w={16} h={16}>
            <path d="M4.500 3.500h10v8h-10z" fill="#2c5d8c" stroke="#fff" strokeWidth="1.300" />
            <path d="M6 14.500h7M9.500 12v2M1 0v3M4 0v3M0.500 3h4v2.500h-4zM2.500 5v9H6" stroke="#fff" strokeWidth="1.300" />
          </Svg>
          <Svg w={16} h={14}>
            <path d="M0 4h3l4-4v14l-4-4H0z" fill="#fff" />
            <path d="M9 4.500c1 1.500 1 3.500 0 5M11 2.500c2 2.500 2 6.500 0 9M13 1c2.500 3.500 2.500 8.500 0 12" stroke="#fff" />
          </Svg>
        </div>
        <time className="mr-[10px] ml-[18px] text-center leading-[18px]">
          20:40<br />2020/4/11
        </time>
        <button aria-label="显示桌面" className="w-[14px] self-stretch border border-[#7fa3c4] bg-linear-to-b from-[#6d9cc4] to-[#255e92]" />
      </div>
    </div>
  );
}

/* memory / network meter that floats over the desktop */
function SpeedMeter() {
  return (
    <div className="absolute right-[10px] bottom-[126px] flex items-center font-['Roboto',sans-serif] text-white">
      <div className="z-10 flex size-[60px] items-center justify-center rounded-full border border-[#3c404c] bg-[#585c6b] shadow-md">
        <svg width="58" height="58" viewBox="0 0 58 58" fill="none" className="absolute" aria-hidden="true">
          <defs>
            <linearGradient id="ringRight" x1="0" y1="0" x2="0" y2="1">
              <stop offset="0" stopColor="#45d8dc" />
              <stop offset="1" stopColor="#d5e04c" />
            </linearGradient>
            <linearGradient id="ringLeft" x1="0" y1="0" x2="0" y2="1">
              <stop offset="0" stopColor="#f0765c" />
              <stop offset="1" stopColor="#e8dc45" />
            </linearGradient>
          </defs>
          <path d="M29 3.500a25.500 25.500 0 010 51" stroke="url(#ringRight)" strokeWidth="1.500" />
          <path d="M29 54.500A25.500 25.500 0 015 19" stroke="url(#ringLeft)" strokeWidth="1.500" />
        </svg>
        <span className="text-2xl font-light">81</span>
        <span className="mt-2 ml-px text-[10px]">%</span>
      </div>
      <div className="-ml-7 flex h-[42px] w-[86px] flex-col rounded-r-full bg-[#30333d] pl-[29px] text-xs shadow-md">
        <div className="flex flex-1 items-center border-b border-[#262932]">
          <Svg w={7} h={7}><path d="M3.500 7V1M0.500 4l3-3 3 3" stroke="#45b0f0" strokeWidth="1.500" /></Svg>
          <span className="ml-[10px] font-medium">4.7</span>
          <span className="text-[10px] text-[#9a9da6]">K/s</span>
        </div>
        <div className="flex flex-1 items-center">
          <Svg w={7} h={7}><path d="M3.500 0v6M0.500 3l3 3 3-3" stroke="#3cb548" strokeWidth="1.500" /></Svg>
          <span className="ml-[10px] font-medium">0.4</span>
          <span className="text-[10px] text-[#9a9da6]">K/s</span>
        </div>
      </div>
    </div>
  );
}

function App() {
  return (
    <div className="relative flex h-screen flex-col overflow-hidden bg-[#e6e6e6] font-['Noto_Sans','Noto_Sans_CJK_SC',sans-serif] text-xs">
      <div className="bg-[#217346]">
        <TitleBar />
        <TabBar />
      </div>
      <Ribbon />
      <FormulaBar />
      <Worksheet />
      <SheetBar />
      <StatusBar />
      <Taskbar />
      <SpeedMeter />
    </div>
  );
}

export default App;
